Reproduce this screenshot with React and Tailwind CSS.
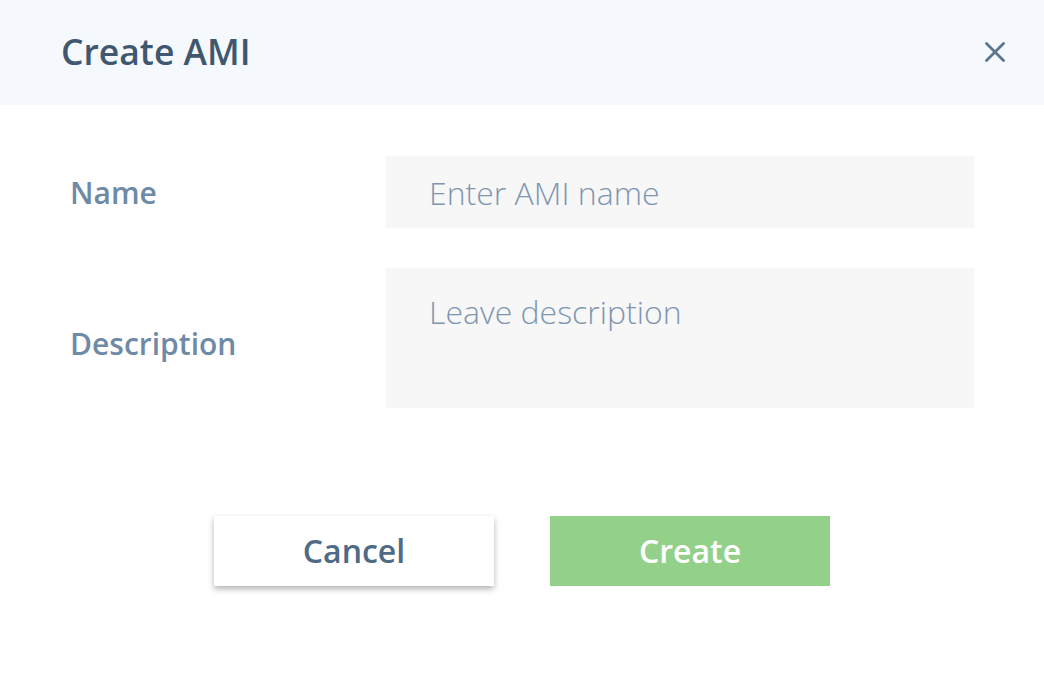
function Field({ label, children, tall }) {
  return (
    <div className="flex items-center">
      <label className={`w-[316px] shrink-0 text-[30px] font-semibold text-[#6f8aa6] ${tall ? "mt-[10px]" : ""}`}>
        {label}
      </label>
      {children}
    </div>
  );
}

export default function App() {
  return (
    <div className="h-[694px] w-[1044px] bg-white font-['Open_Sans',sans-serif]">
      <header className="flex h-[105px] items-center justify-between bg-[#f5f8fc] pl-[61px] pr-[29px]">
        <h1 className="-mt-[1px] text-[35.5px] font-semibold text-[#3f5870]">Create AMI</h1>
        <button type="button" aria-label="Close" className="-mt-[2px] flex h-10 w-10 items-center justify-center text-[#5a7590]">
          <svg width="20" height="20" viewBox="0 0 20 20" fill="none" stroke="currentColor" strokeWidth="2.8" strokeLinecap="round">
            <path d="M1.5 1.5l17 17M18.5 1.5l-17 17" />
          </svg>
        </button>
      </header>

      <form className="flex flex-col gap-[40px] px-[70px] pt-[51px]">
        <Field label="Name">
          <input
            placeholder="Enter AMI name"
            className="h-[72px] flex-1 bg-[#f7f7f7] px-[43px] text-[32px] font-light text-[#3f5870] outline-none placeholder:text-[#7f96b0]"
          />
        </Field>
        <Field label="Description" tall>
          <textarea
            placeholder="Leave description"
            className="h-[140px] flex-1 resize-none bg-[#f7f7f7] px-[43px] pt-[20px] text-[32px] font-light text-[#3f5870] outline-none placeholder:text-[#7f96b0]"
          />
        </Field>
      </form>

      <div className="mt-[108px] flex justify-center gap-[56px]">
        <button
          type="button"
          className="h-[70px] w-[280px] bg-white text-[32px] font-semibold text-[#4f6a85] shadow-[0_3px_6px_rgba(0,0,0,0.3)]"
        >
          Cancel
        </button>
        <button type="button" className="h-[70px] w-[280px] bg-[#93d08a] text-[32px] font-semibold text-white">
          Create
        </button>
      </div>
    </div>
  );
}
